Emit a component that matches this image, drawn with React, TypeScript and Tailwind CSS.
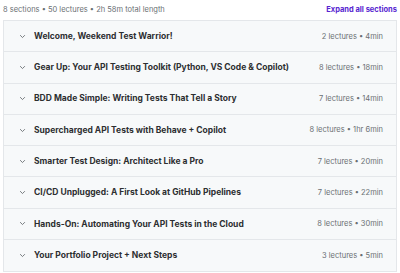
import React from 'react';

const sections = [
  { title: 'Welcome, Weekend Test Warrior!', meta: '2 lectures • 4min' },
  { title: 'Gear Up: Your API Testing Toolkit (Python, VS Code & Copilot)', meta: '8 lectures • 18min' },
  { title: 'BDD Made Simple: Writing Tests That Tell a Story', meta: '7 lectures • 14min' },
  { title: 'Supercharged API Tests with Behave + Copilot', meta: '8 lectures • 1hr 6min' },
  { title: 'Smarter Test Design: Architect Like a Pro', meta: '7 lectures • 20min' },
  { title: 'CI/CD Unplugged: A First Look at GitHub Pipelines', meta: '7 lectures • 22min' },
  { title: 'Hands-On: Automating Your API Tests in the Cloud', meta: '8 lectures • 30min' },
  { title: 'Your Portfolio Project + Next Steps', meta: '3 lectures • 5min' },
];

export default function App() {
  return (
    <div className="w-[400px] h-[273px] bg-white px-[3px] pt-[1px] font-['Inter',sans-serif] overflow-hidden">
      <div className="flex items-center justify-between h-[17px]">
        <span className="text-[7.5px] text-[#6a6f73]">8 sections • 50 lectures • 2h 58m total length</span>
        <span className="text-[7.5px] font-bold text-[#5624d0]">Expand all sections</span>
      </div>
      <div className="mt-[2px] border border-[#e4e7ea]">
        {sections.map((s, i) => (
          <div
            key={i}
            className={`flex items-center h-[31.3px] bg-[#f7f9fa] pl-[15px] pr-[13px] ${i < sections.length - 1 ? 'border-b border-[#e4e7ea]' : ''}`}
          >
            <svg className="w-[7px] h-[7px] text-[#6a6f73] mr-[8px]" viewBox="0 0 10 10" fill="none" stroke="currentColor" strokeWidth="1.3">
              <path d="M2 3.5l3 3 3-3" strokeLinecap="round" strokeLinejoin="round" />
            </svg>
            <span className="flex-1 text-[8.5px] font-bold text-[#2d2f31] truncate">{s.title}</span>
            <span className="text-[7.5px] text-[#6a6f73] ml-2">{s.meta}</span>
          </div>
        ))}
      </div>
    </div>
  );
}
